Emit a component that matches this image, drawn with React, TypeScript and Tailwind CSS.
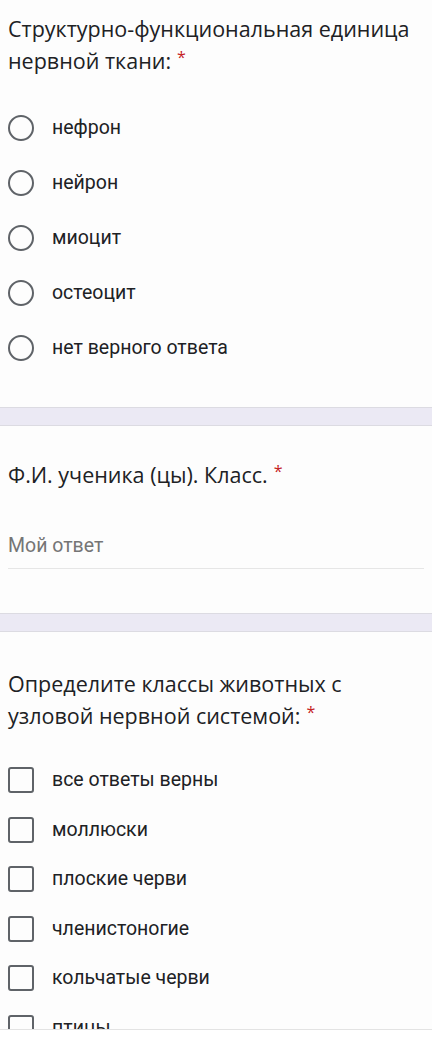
import React from "react";

const radios = ["нефрон", "нейрон", "миоцит", "остеоцит", "нет верного ответа"];
const checks = ["все ответы верны", "моллюски", "плоские черви", "членистоногие", "кольчатые черви", "птицы"];

function Required() {
  return <span className="relative top-[3px] ml-1.5 align-text-top text-[16px] leading-none text-[#c5221f]">*</span>;
}

function Band() {
  return <div className="h-[19px] bg-[#ebe9f4] border-y border-[#dcdbe2]" />;
}

export default function App() {
  const title = "font-['Open_Sans',sans-serif] text-[21.5px] leading-[32px] text-[#202124]";
  const option = "font-['Roboto',sans-serif] text-[19.5px] leading-[26px] text-[#202124]";

  return (
    <div className="relative h-[1041px] overflow-hidden bg-[#fdfdfd]">
      <section className="px-2 pt-[13px] pb-[46px]">
        <h2 className={title}>
          Структурно-функциональная единица нервной ткани:<Required />
        </h2>
        <div className="mt-[38px] flex flex-col gap-[29px]">
          {radios.map((r) => (
            <label key={r} className="flex items-center gap-[18px] h-[26px]">
              <span className="w-[26px] h-[26px] rounded-full border-[2.5px] border-[#5f6368] shrink-0" />
              <span className={option}>{r}</span>
            </label>
          ))}
        </div>
      </section>

      <Band />

      <section className="px-2 pt-[33px] pb-[44px]">
        <h2 className={title}>
          Ф.И. ученика (цы). Класс.<Required />
        </h2>
        <div className="mt-[42px] pb-[9px] border-b border-[#e6e6e6] font-['Roboto',sans-serif] text-[19.5px] leading-[26px] text-[#757575]">
          Мой ответ
        </div>
      </section>

      <Band />

      <section className="px-2 pt-[36px]">
        <h2 className={title}>
          Определите классы животных с узловой нервной системой:<Required />
        </h2>
        <div className="mt-[35px] flex flex-col gap-[23.5px]">
          {checks.map((c) => (
            <label key={c} className="flex items-center gap-[18px] h-[26px]">
              <span className="w-[26px] h-[26px] rounded-[3px] border-[2.5px] border-[#5f6368] shrink-0" />
              <span className={option}>{c}</span>
            </label>
          ))}
        </div>
      </section>

      <div className="absolute left-0 right-0 bottom-0 h-[12px] bg-white border-t border-[#e3e3e3]" />
    </div>
  );
}
